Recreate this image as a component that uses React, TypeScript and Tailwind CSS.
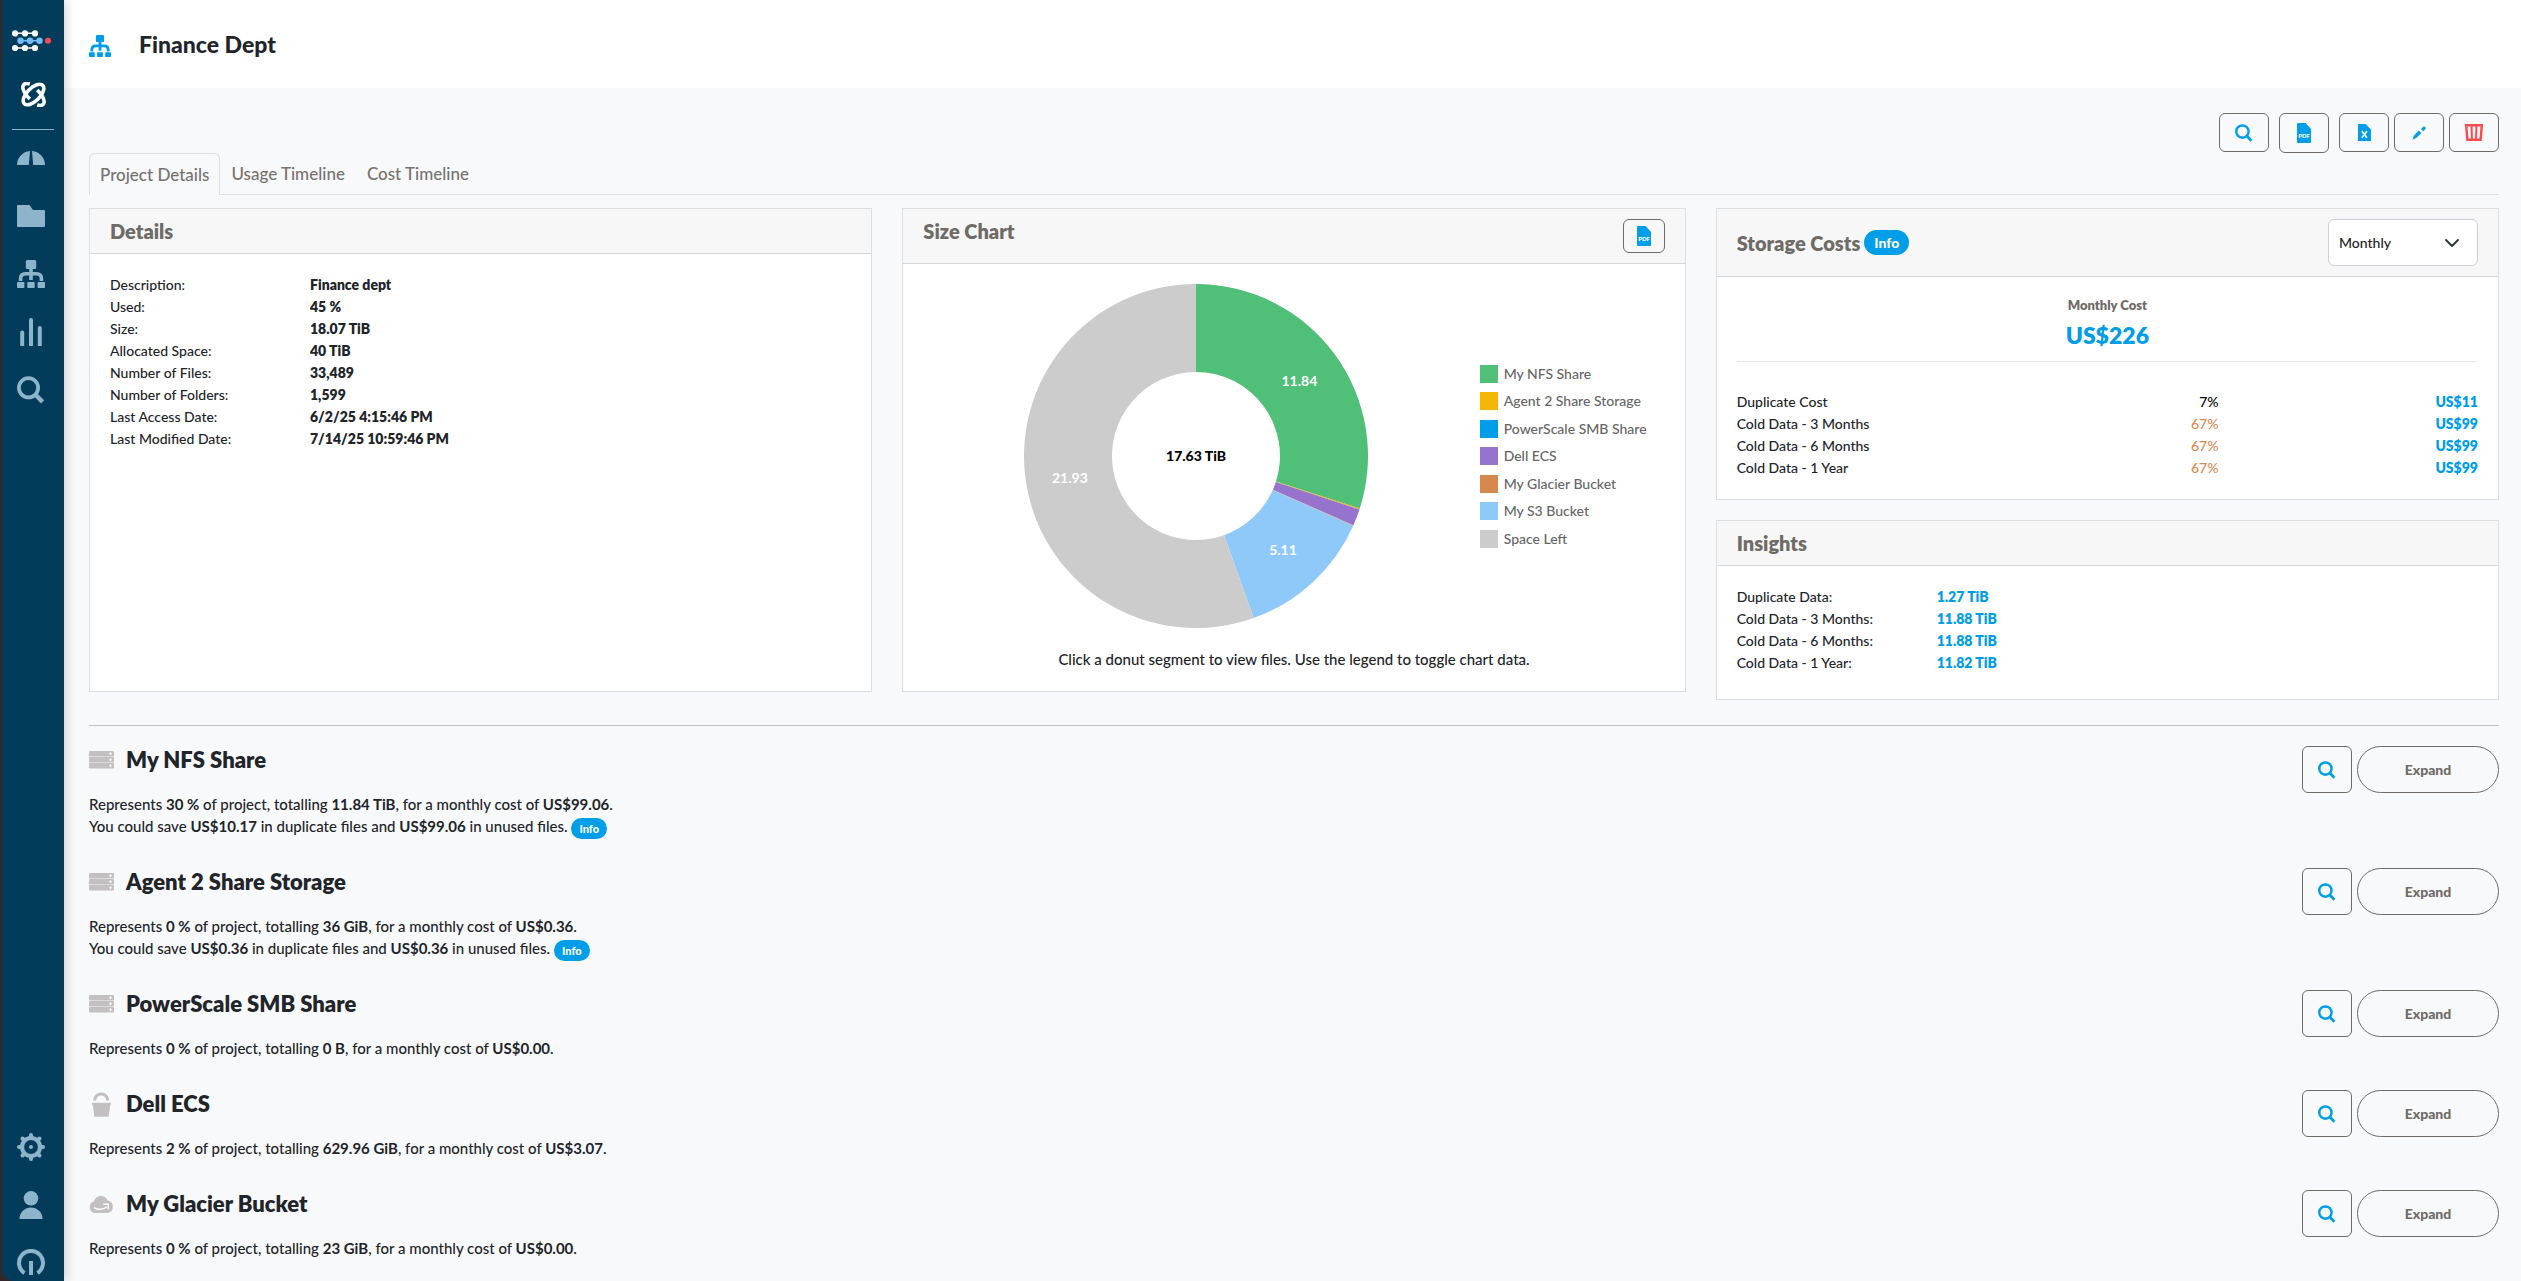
import React from "react";

const BLUE = "#009ee8";

function SitemapIcon({ className }: { className: string }) {
  return (
    <svg viewBox="0 0 28 28" className={className} fill="currentColor" aria-hidden="true">
      <rect x="8.8" y="0" width="10.4" height="9" rx="1.5" />
      <path d="M14 9v11M3.6 21v-2.2c0-3.3 1.7-5 5-5h10.8c3.3 0 5 1.7 5 5V21" fill="none" stroke="currentColor" strokeWidth="3.6" />
      <rect x="0" y="22" width="7.4" height="6" rx="0.8" />
      <rect x="10.3" y="22" width="7.4" height="6" rx="0.8" />
      <rect x="20.6" y="22" width="7.4" height="6" rx="0.8" />
    </svg>
  );
}

function SearchIcon({ className }: { className: string }) {
  return (
    <svg viewBox="0 0 28 28" className={className} fill="none" stroke="currentColor" strokeWidth="3.8" aria-hidden="true">
      <circle cx="11.5" cy="11.8" r="9.6" />
      <path d="M18 18.3l7.6 7.6" strokeWidth="4.4" />
    </svg>
  );
}

function PdfIcon() {
  return (
    <svg viewBox="0 0 14 20" className="h-5 w-3.5" aria-hidden="true">
      <path d="M1 0h7.5L14 6v13a1 1 0 0 1-1 1H1a1 1 0 0 1-1-1V1a1 1 0 0 1 1-1z" fill={BLUE} />
      <text x="7" y="14.6" textAnchor="middle" fontSize="6" fontWeight="900" fill="#fff">PDF</text>
    </svg>
  );
}

function ExcelIcon() {
  return (
    <svg viewBox="0 0 13 17" className="h-[17px] w-[13px]" aria-hidden="true">
      <path d="M0 0h7.5L13 5.5V17H0z" fill={BLUE} />
      <path d="M3.9 7.2l5 6.6M8.9 7.2l-5 6.6" stroke="#fff" strokeWidth="1.7" />
    </svg>
  );
}

function PencilIcon() {
  return (
    <svg viewBox="0 0 14 14" className="size-3.5" fill={BLUE} aria-hidden="true">
      <path d="M6.9 4.6l2.500 2.500-5.200 5L0.300 13.700l1.700-4.300z" />
      <path d="M8.900 3L11 0.900c1-0.900 2-0.300 2.400 0.300 0.500 0.600 0.400 1.500-0.300 2.200L11.200 5.300z" />
    </svg>
  );
}

function TrashIcon() {
  return (
    <svg viewBox="0 0 18 17" className="h-[17px] w-[18px]" fill="none" stroke="#fb4a4e" aria-hidden="true">
      <path d="M1.200 1.200h15.600l-1.200 14.600H2.400z" strokeWidth="2.400" />
      <path d="M6.500 1l0.500 15M11.500 1l-0.500 15" strokeWidth="2" />
    </svg>
  );
}

function ServerIcon() {
  return (
    <svg viewBox="0 0 25 18" className="h-[18px] w-[25px]" aria-hidden="true">
      {[0, 6, 12].map((y) => (
        <g key={y}>
          <rect x="0" y={y} width="25" height="5.4" rx="1" fill="#c2c0c0" />
          <path d={`M20 ${y + 2.7}h3M21.5 ${y + 1.2}v3`} stroke="#fff" strokeWidth="0.9" />
        </g>
      ))}
    </svg>
  );
}

function BucketIcon() {
  return (
    <svg viewBox="0 0 25 25" className="size-[25px]" aria-hidden="true">
      <path d="M5.600 8.500a6.600 6.600 0 0 1 13.200 0" fill="none" stroke="#c2c0c0" strokeWidth="3" />
      <path d="M3 10.800h19v2h-0.700l-1.700 12H5.400L3.700 12.800H3z" fill="#c2c0c0" />
    </svg>
  );
}

function GlacierIcon() {
  return (
    <svg viewBox="0 0 25 17" className="h-[17px] w-[25px]" aria-hidden="true">
      <path d="M6 17a6 6 0 0 1-1-11.7A7.2 7.2 0 0 1 18.6 4.600 6.300 6.300 0 0 1 18.700 17z" fill="#c2c0c0" />
      <path d="M5 11.600c3.500 2.300 9.500 2.600 12.600-0.800M14.200 8.300h5v5" fill="none" stroke="#fff" strokeWidth="1.500" />
    </svg>
  );
}

function LogoMark() {
  return (
    <svg viewBox="0 0 39 22" className="h-[22px] w-[39px]" aria-hidden="true">
      <g fill="#fff">
        <path d="M3 2.600h20v1.500H3zM3 17.200h20v1.500H3z" />
        {[3, 13, 23].map((x) => (
          <g key={x}>
            <circle cx={x} cy="3.400" r="3.100" />
            <circle cx={x} cy="18" r="3.100" />
          </g>
        ))}
      </g>
      <g fill="#72bdf7">
        <path d="M8 9.900h20v1.600H8z" />
        {[8.5, 18, 27.5].map((x) => (
          <circle key={x} cx={x} cy="10.700" r="3.200" />
        ))}
      </g>
      <circle cx="36" cy="10.700" r="3" fill="#fb4a4e" />
    </svg>
  );
}

function OrbitMark() {
  const hook = "M8.800 1.900C2.800 0.400 0.800 3.400 2.400 8c1 3 3.400 6 6.400 9";
  return (
    <svg viewBox="0 0 25 25" className="size-[25px]" fill="none" stroke="#fff" strokeWidth="3.600" aria-hidden="true">
      <ellipse cx="12.500" cy="12.500" rx="13" ry="6.500" transform="rotate(-45 12.500 12.500)" />
      <path d={hook} />
      <path d={hook} transform="rotate(180 12.500 12.500)" />
    </svg>
  );
}

function GaugeIcon() {
  return (
    <svg viewBox="0 0 28 28" className="size-7" fill="currentColor" aria-hidden="true">
      <path d="M0 21a14 14 0 0 1 13-14l-1.200 14zM28 21A14 14 0 0 0 15 7l1.200 14z" />
    </svg>
  );
}

function FolderIcon() {
  return (
    <svg viewBox="0 0 28 28" className="size-7" fill="currentColor" aria-hidden="true">
      <path d="M1 3h11.500l3.500 5h11a1 1 0 0 1 1 1v15a1 1 0 0 1-1 1H1a1 1 0 0 1-1-1V4a1 1 0 0 1 1-1z" />
    </svg>
  );
}

function BarsIcon() {
  return (
    <svg viewBox="0 0 28 28" className="size-7" fill="currentColor" aria-hidden="true">
      <path d="M3.200 28V14.500a2 2 0 0 1 4 0V28zM12 28V2a2 2 0 0 1 4 0v26zM20.800 28V10a2 2 0 0 1 4 0v18z" />
    </svg>
  );
}

function GearIcon() {
  return (
    <svg viewBox="0 0 28 28" className="size-7" fill="none" stroke="currentColor" aria-hidden="true">
      <circle cx="14" cy="14" r="9" strokeWidth="4.200" />
      <circle cx="14" cy="14" r="2" fill="currentColor" stroke="none" />
      {[0, 45, 90, 135, 180, 225, 270, 315].map((a) => (
        <path key={a} d="M14 4.500V2" strokeWidth="4" strokeLinecap="round" transform={`rotate(${a} 14 14)`} />
      ))}
    </svg>
  );
}

function UserIcon() {
  return (
    <svg viewBox="0 0 28 28" className="size-7" fill="currentColor" aria-hidden="true">
      <circle cx="14" cy="7.300" r="7.300" />
      <path d="M2.500 28a11.500 11.500 0 0 1 23 0z" />
    </svg>
  );
}

function PowerIcon() {
  return (
    <svg viewBox="0 0 28 28" className="size-7" fill="none" stroke="currentColor" strokeWidth="4" aria-hidden="true">
      <path d="M7.500 24a12 12 0 1 1 13 0M14 12v14" />
    </svg>
  );
}

const navTop = [
  { label: "Dashboard", icon: <GaugeIcon /> },
  { label: "Files", icon: <FolderIcon /> },
  { label: "Projects", icon: <SitemapIcon className="size-7" /> },
  { label: "Reports", icon: <BarsIcon /> },
  { label: "Search", icon: <SearchIcon className="size-7" /> },
];

const navBottom = [
  { label: "Settings", icon: <GearIcon /> },
  { label: "Account", icon: <UserIcon /> },
  { label: "Sign out", icon: <PowerIcon /> },
];

const details = [
  ["Description:", "Finance dept"],
  ["Used:", "45 %"],
  ["Size:", "18.07 TiB"],
  ["Allocated Space:", "40 TiB"],
  ["Number of Files:", "33,489"],
  ["Number of Folders:", "1,599"],
  ["Last Access Date:", "6/2/25 4:15:46 PM"],
  ["Last Modified Date:", "7/14/25 10:59:46 PM"],
];

const insights = [
  ["Duplicate Data:", "1.27 TiB"],
  ["Cold Data - 3 Months:", "11.88 TiB"],
  ["Cold Data - 6 Months:", "11.88 TiB"],
  ["Cold Data - 1 Year:", "11.82 TiB"],
];

const costs = [
  { name: "Duplicate Cost", pct: "7%", cost: "US$11", tone: "text-black" },
  { name: "Cold Data - 3 Months", pct: "67%", cost: "US$99", tone: "text-[#d6894f]" },
  { name: "Cold Data - 6 Months", pct: "67%", cost: "US$99", tone: "text-[#d6894f]" },
  { name: "Cold Data - 1 Year", pct: "67%", cost: "US$99", tone: "text-[#d6894f]" },
];

const slices = [
  { name: "My NFS Share", value: 11.84, color: "#50bf77" },
  { name: "Agent 2 Share Storage", value: 0.04, color: "#f2b606" },
  { name: "PowerScale SMB Share", value: 0, color: "#009ee8" },
  { name: "Dell ECS", value: 0.62, color: "#9673cd" },
  { name: "My Glacier Bucket", value: 0.02, color: "#d6894f" },
  { name: "My S3 Bucket", value: 5.11, color: "#8fc9fa" },
  { name: "Space Left", value: 21.93, color: "#cccccc" },
];

const shares = [
  { name: "My NFS Share", icon: <ServerIcon />, pct: "30 %", size: "11.84 TiB", cost: "US$99.06", save: ["US$10.17", "US$99.06"] },
  { name: "Agent 2 Share Storage", icon: <ServerIcon />, pct: "0 %", size: "36 GiB", cost: "US$0.36", save: ["US$0.36", "US$0.36"] },
  { name: "PowerScale SMB Share", icon: <ServerIcon />, pct: "0 %", size: "0 B", cost: "US$0.00" },
  { name: "Dell ECS", icon: <BucketIcon />, pct: "2 %", size: "629.96 GiB", cost: "US$3.07" },
  { name: "My Glacier Bucket", icon: <GlacierIcon />, pct: "0 %", size: "23 GiB", cost: "US$0.00" },
];

function Donut() {
  const total = slices.reduce((sum, s) => sum + s.value, 0);
  const point = (turn: number, r: number) => {
    const a = turn * 2 * Math.PI;
    return `${172 + r * Math.sin(a)} ${172 - r * Math.cos(a)}`;
  };
  let start = 0;
  return (
    <svg viewBox="0 0 344 344" className="size-[344px]" role="img" aria-label="Size by storage">
      {slices.map((s) => {
        const from = start;
        const to = start + s.value / total;
        start = to;
        if (s.value === 0) return null;
        const large = to - from > 0.5 ? 1 : 0;
        const mid = (from + to) / 2;
        const [tx, ty] = point(mid, 128).split(" ");
        return (
          <g key={s.name}>
            <path
              d={`M${point(from, 172)}A172 172 0 ${large} 1 ${point(to, 172)}L${point(to, 84)}A84 84 0 ${large} 0 ${point(from, 84)}Z`}
              fill={s.color}
            />
            {s.value > 1 && (
              <text x={tx} y={Number(ty) + 5} textAnchor="middle" fontSize="14" fontWeight="700" fill="#fff">
                {s.value}
              </text>
            )}
          </g>
        );
      })}
      <text x="172" y="177" textAnchor="middle" fontSize="14" fontWeight="900" fill="#000">17.63 TiB</text>
    </svg>
  );
}

function Card({ title, action, badge, children, className = "" }: {
  title: string;
  action?: React.ReactNode;
  badge?: React.ReactNode;
  children: React.ReactNode;
  className?: string;
}) {
  return (
    <section className={`border border-[#dcdee2] bg-white ${className}`}>
      <header className="flex justify-between border-b border-[#d6d7d9] bg-[#f7f7f7] px-5 py-2.5">
        <div className={`flex items-center gap-1 ${badge ? "" : "self-start"}`}>
          <h2 className="text-xl leading-6 font-extrabold text-[#6f6b67]">{title}</h2>
          {badge}
        </div>
        {action}
      </header>
      {children}
    </section>
  );
}

function DefinitionRows({ rows, tone }: { rows: string[][]; tone: string }) {
  return (
    <dl className="grid grid-cols-[200px_1fr]">
      {rows.map(([k, v]) => (
        <React.Fragment key={k}>
          <dt>{k}</dt>
          <dd className={`font-extrabold ${tone}`}>{v}</dd>
        </React.Fragment>
      ))}
    </dl>
  );
}

const toolButton = "flex w-[50px] items-center justify-center rounded-md border border-[#6f6b67]";

export default function App() {
  return (
    <div className="flex h-screen overflow-hidden bg-[#f8f9fb] font-[Lato,sans-serif] text-sm leading-[22px] font-medium text-[#212429]">
      <div className="z-10 w-16 shrink-0 bg-[#33282b] pl-0.5 shadow-[2px_0_10px_rgba(0,0,0,0.18)]">
        <nav aria-label="Main" className="flex h-full flex-col items-center rounded-bl-xl bg-[#033c5a] pt-[30px] pr-1 pb-1 text-[#8db4ca]">
          <LogoMark />
          <div className="mt-[30px] pl-1">
            <OrbitMark />
          </div>
          <div className="mt-[22px] pl-1">
            <hr className="w-[42px] border-[#8db4ca]" />
          </div>
          <div className="mt-3.5 flex flex-col gap-[30px]">
            {navTop.map((n) => (
              <a key={n.label} href="#" aria-label={n.label}>{n.icon}</a>
            ))}
          </div>
          <div className="mt-auto flex flex-col gap-[30px]">
            {navBottom.map((n) => (
              <a key={n.label} href="#" aria-label={n.label}>{n.icon}</a>
            ))}
          </div>
        </nav>
      </div>

      <div className="min-w-0 flex-1">
        <header className="flex h-22 items-center gap-7 bg-white pl-[25px]">
          <span className="pt-1 text-[#009ee8]"><SitemapIcon className="size-[22px]" /></span>
          <h1 className="text-[23px] leading-7 font-black">Finance Dept</h1>
        </header>

        <main className="pt-[25px] pr-[22px] pl-[25px]">
          <div className="flex items-start justify-end gap-[5px]">
            <button type="button" aria-label="Search project" className={`${toolButton} mr-[5px] h-[39px] text-[#009ee8]`}>
              <SearchIcon className="size-[18px]" />
            </button>
            <button type="button" aria-label="Export PDF" className={`${toolButton} mr-[5px] h-10`}><PdfIcon /></button>
            <button type="button" aria-label="Export spreadsheet" className={`${toolButton} h-[39px]`}><ExcelIcon /></button>
            <button type="button" aria-label="Edit" className={`${toolButton} h-[39px]`}><PencilIcon /></button>
            <button type="button" aria-label="Delete" className={`${toolButton} h-[39px]`}><TrashIcon /></button>
          </div>

          <div role="tablist" className="flex border-b border-[#dcdee2] text-[17px] text-[#76726e]">
            <button type="button" role="tab" aria-selected="true" className="-mb-px h-[42px] rounded-t-md border border-b-0 border-[#dcdee2] bg-[#f8f9fb] px-2.5">
              Project Details
            </button>
            <button type="button" role="tab" aria-selected="false" className="h-[41px] px-[11px]">Usage Timeline</button>
            <button type="button" role="tab" aria-selected="false" className="h-[41px] px-[11px]">Cost Timeline</button>
          </div>

          <div className="mt-[13px] grid grid-cols-3 items-start gap-[30px]">
            <Card title="Details" className="h-[484px]">
              <div className="p-5">
                <DefinitionRows rows={details} tone="" />
              </div>
            </Card>

            <Card
              title="Size Chart"
              className="h-[484px]"
              action={
                <button type="button" aria-label="Export chart as PDF" className="flex h-[34px] w-[42px] items-center justify-center rounded-md border border-[#6f6b67]">
                  <PdfIcon />
                </button>
              }
            >
              <div className="p-5">
                <div className="flex items-center">
                  <div className="flex flex-1 justify-center pr-2.5"><Donut /></div>
                  <ul className="flex h-[187px] w-[185px] flex-col justify-between">
                    {slices.map((s) => (
                      <li key={s.name}>
                        <button type="button" className="flex items-center gap-1.5 text-[#666]">
                          <span className="size-[18px]" style={{ backgroundColor: s.color }} />
                          {s.name}
                        </button>
                      </li>
                    ))}
                  </ul>
                </div>
                <p className="mt-5 text-center text-[15px]">Click a donut segment to view files. Use the legend to toggle chart data.</p>
              </div>
            </Card>

            <div className="flex flex-col gap-5">
              <Card
                title="Storage Costs"
                badge={<a href="#" className="rounded-full bg-[#009ee8] px-2.5 pt-px text-sm leading-6 font-black text-white">Info</a>}
                action={
                  <div className="relative w-[150px]">
                    <select aria-label="Cost period" className="h-[47px] w-full appearance-none rounded-md border border-[#cbd0d6] bg-white px-2.5">
                      <option>Monthly</option>
                    </select>
                    <svg viewBox="0 0 14 8" className="pointer-events-none absolute top-5 right-[19px] h-2 w-3.5" fill="none" stroke="#343a40" strokeWidth="2" strokeLinecap="round" strokeLinejoin="round" aria-hidden="true">
                      <path d="M1 1l6 6 6-6" />
                    </svg>
                  </div>
                }
              >
                <div className="p-5">
                  <div className="border-b border-[#e6e7e9] pb-2.5 text-center">
                    <p className="text-[13px] leading-4 font-extrabold text-[#6f6b67]">Monthly Cost</p>
                    <p className="mt-1.5 text-[23px] leading-8 font-extrabold text-[#009ee8]">US$226</p>
                  </div>
                  <table className="mt-[29px] w-full">
                    <tbody>
                      {costs.map((c) => (
                        <tr key={c.name}>
                          <th scope="row" className="text-left font-medium">{c.name}</th>
                          <td className={`w-1/3 text-right ${c.tone}`}>{c.pct}</td>
                          <td className="w-[35%] text-right font-extrabold text-[#009ee8]">{c.cost}</td>
                        </tr>
                      ))}
                    </tbody>
                  </table>
                </div>
              </Card>

              <Card title="Insights">
                <div className="px-5 pt-5 pb-[25px]">
                  <DefinitionRows rows={insights} tone="text-[#009ee8]" />
                </div>
              </Card>
            </div>
          </div>

          <hr className="mt-[25px] border-[#c0c2c5]" />

          <div className="flex flex-col gap-[31px] pt-5">
            {shares.map((s) => (
              <article key={s.name} className="flex items-start justify-between">
                <div>
                  <div className="flex h-7 items-center gap-3">
                    {s.icon}
                    <h2 className="text-[22px] leading-7 font-extrabold">{s.name}</h2>
                  </div>
                  <p className="mt-[19px] text-[15px]">
                    Represents <b>{s.pct}</b> of project, totalling <b>{s.size}</b>, for a monthly cost of <b>{s.cost}</b>.
                  </p>
                  {s.save && (
                    <p className="flex h-[22px] items-center gap-1 text-[15px]">
                      <span>
                        You could save <b>{s.save[0]}</b> in duplicate files and <b>{s.save[1]}</b> in unused files.
                      </span>
                      <a href="#" className="mt-1 rounded-full bg-[#009ee8] px-2 pt-px text-[11px] leading-5 font-black text-white">Info</a>
                    </p>
                  )}
                </div>
                <div className="flex gap-[5px]">
                  <button type="button" aria-label={`Search ${s.name}`} className={`${toolButton} h-[47px] text-[#009ee8]`}>
                    <SearchIcon className="size-[18px]" />
                  </button>
                  <button type="button" className="h-[47px] w-[142px] rounded-full border border-[#6f6b67] font-black text-[#6f6b67]">
                    Expand
                  </button>
                </div>
              </article>
            ))}
          </div>
        </main>
      </div>
    </div>
  );
}
